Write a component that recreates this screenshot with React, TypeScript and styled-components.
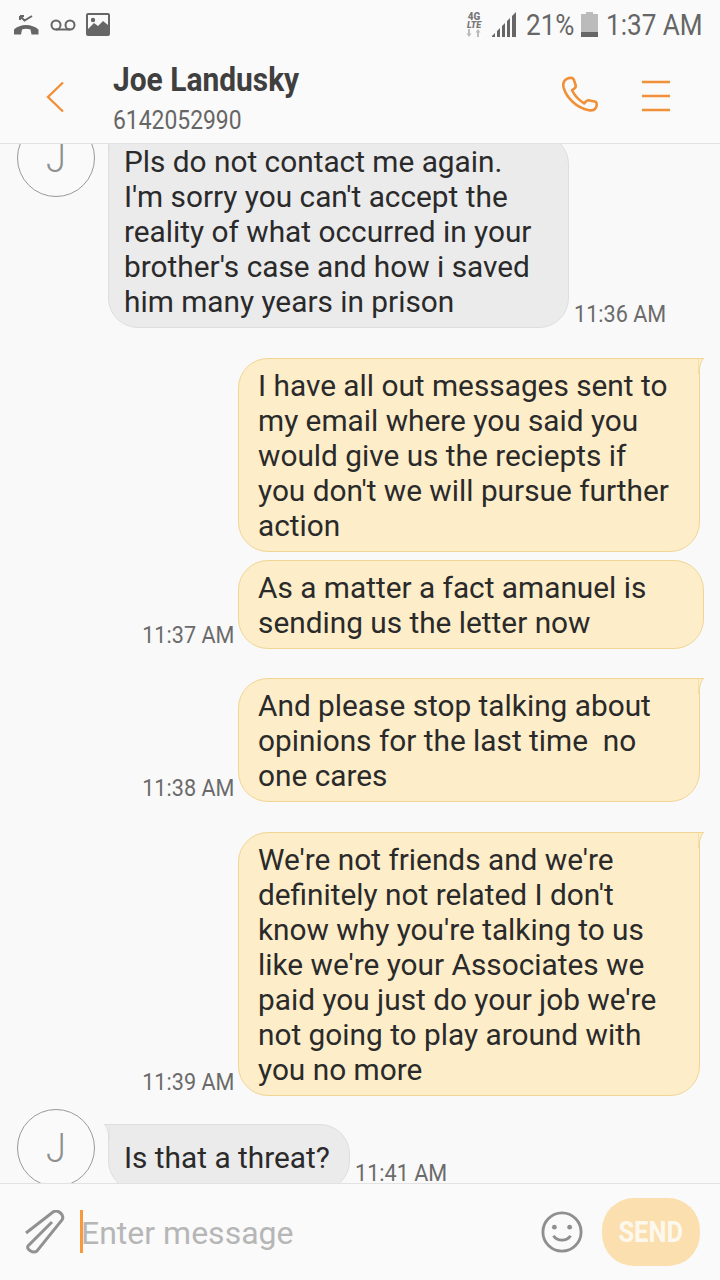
import React from 'react';
import styled, { createGlobalStyle } from 'styled-components';

const GlobalStyle = createGlobalStyle`
  html, body {
    margin: 0;
    padding: 0;
    background: #f9f9f9;
  }
  body {
    font-family: Roboto, "Liberation Sans", sans-serif;
  }
`;

const Screen = styled.div`
  width: 720px;
  height: 1280px;
  display: flex;
  flex-direction: column;
  overflow: hidden;
  background: #f9f9f9;
`;

const Top = styled.header`
  height: 144px;
  flex: none;
  box-sizing: border-box;
  background: #fafafa;
  border-bottom: 1px solid #e2e2e2;
  display: flex;
  flex-direction: column;
`;

const StatusBar = styled.div`
  height: 50px;
  display: flex;
  align-items: flex-start;
  justify-content: space-between;
  padding: 12px 17px 0 14px;
  box-sizing: border-box;
  color: #666;
`;

const StatusGroup = styled.div`
  display: flex;
  align-items: center;
  height: 25px;
`;

const NetworkMark = styled.div`
  width: 16px;
  margin-right: 10px;
  display: flex;
  flex-direction: column;
  align-items: center;
  font-weight: 900;
  color: #777;
`;

const FourG = styled.span`
  font-size: 11px;
  line-height: 9px;
  transform: scaleX(0.9);
`;

const Lte = styled.span`
  font-size: 9px;
  line-height: 8px;
  font-style: italic;
`;

const StatusText = styled.span<{ $w: number }>`
  width: ${p => p.$w}px;
  font-size: 30px;
  line-height: 25px;
  white-space: nowrap;
  display: inline-block;
  transform: scaleX(0.87);
  transform-origin: left center;
`;

const TitleBar = styled.div`
  flex: 1;
  display: flex;
  align-items: flex-start;
`;

const BackSlot = styled.div`
  width: 113px;
  flex: none;
  padding: 31px 0 0 46px;
  box-sizing: border-box;
`;

const TitleBlock = styled.div`
  flex: 1;
  display: flex;
  flex-direction: column;
  padding-top: 9px;
`;

const Name = styled.div`
  font-size: 34px;
  line-height: 40px;
  font-weight: 700;
  color: #3f3f3f;
  white-space: nowrap;
  transform: scaleX(0.88);
  transform-origin: left center;
`;

const Number = styled.div`
  font-size: 26px;
  line-height: 30px;
  margin-top: 6px;
  color: #666;
  transform: scaleX(0.88);
  transform-origin: left center;
`;

const TitleActions = styled.div`
  display: flex;
  align-items: center;
  gap: 41px;
  padding: 26px 50px 0 0;
`;

const Thread = styled.main`
  flex: 1;
  min-height: 0;
  overflow: hidden;
  display: flex;
  flex-direction: column;
  justify-content: flex-end;
`;

const Row = styled.div<{ $gap: number; $out?: boolean; $inset: number; $cut?: boolean }>`
  display: flex;
  flex: none;
  align-items: flex-end;
  margin-top: ${p => p.$gap}px;
  margin-bottom: ${p => (p.$cut ? -8 : 0)}px;
  padding: 0 ${p => p.$inset}px 0 ${p => (p.$out ? 0 : 17)}px;
  justify-content: ${p => (p.$out ? 'flex-end' : 'flex-start')};
`;

const Avatar = styled.div`
  width: 78px;
  height: 78px;
  flex: none;
  box-sizing: border-box;
  align-self: flex-start;
  margin: -15px 13px 0 0;
  border: 1.5px solid #999;
  border-radius: 50%;
  background: #fafafa;
  display: flex;
  align-items: center;
  justify-content: center;
  color: #8f8f8f;
  font-size: 40px;
  font-weight: 300;
`;

const Initial = styled.span`
  display: inline-block;
  transform: scaleX(0.9);
`;

const Bubble = styled.div<{ $out?: boolean; $tail?: boolean; $single?: boolean }>`
  position: relative;
  flex: none;
  box-sizing: border-box;
  padding: ${p => (p.$single ? '15px 19px 15px 15px' : `9px 19px 8px ${p.$out ? 19 : 15}px`)};
  font-size: 29.8px;
  line-height: 35px;
  color: #2a2a2a;
  white-space: pre;
  border: 1px solid ${p => (p.$out ? '#f0d594' : '#dedede')};
  background: ${p => (p.$out ? '#fdedc9' : '#ebebeb')};
  border-radius: 30px;
  ${p => p.$tail && (p.$out ? 'border-top-right-radius: 0;' : 'border-top-left-radius: 0;')}
`;

const Tail = styled.svg<{ $out?: boolean }>`
  position: absolute;
  top: -1px;
  width: 6px;
  height: 16px;
  ${p => (p.$out ? 'right: -5px;' : 'left: -5px;')}
`;

const Stamp = styled.span<{ $left?: boolean; $lift?: boolean }>`
  flex: none;
  font-size: 24px;
  line-height: 28px;
  color: #6b6b6b;
  white-space: nowrap;
  transform: scaleX(0.9);
  transform-origin: ${p => (p.$left ? 'right' : 'left')} center;
  margin: 0 ${p => (p.$left ? 4 : 0)}px ${p => (p.$lift ? 4 : 0)}px ${p => (p.$left ? 0 : 5)}px;
`;

const Composer = styled.footer`
  height: 97px;
  flex: none;
  box-sizing: border-box;
  background: #fafafa;
  border-top: 1px solid #e2e2e2;
  display: flex;
  align-items: center;
  padding: 0 20px 0 25px;
  position: relative;
`;

const Caret = styled.div`
  width: 3px;
  height: 43px;
  flex: none;
  margin: -1px 0 0 15px;
  background: #f79a3e;
`;

const Placeholder = styled.div`
  flex: 1;
  font-size: 32px;
  color: #b6b6b6;
  margin: 1px 0 0 -2px;
`;

const SendButton = styled.button`
  width: 98px;
  height: 68px;
  flex: none;
  margin: 0 0 0 19px;
  padding: 0;
  border: none;
  border-radius: 32px;
  background: #fbdfae;
  color: #fdf8ee;
  font-family: inherit;
  font-size: 29px;
  font-weight: 700;
`;

const SendLabel = styled.span`
  display: inline-block;
  transform: scaleX(0.88);
`;

const ORANGE = '#f0913a';

const MissedCall = () => (
  <svg width="25" height="22" viewBox="0 0 25 22" fill="none">
    <path d="M6 2l4.500 4.500L18 2M6 2h4M6 2v4" stroke="#666" strokeWidth="2" />
    <path d="M0 15.500C6 9.500 18 9.500 24.500 15.500v5H17.500l-1-5c-3-1-6-1-8.500 0l-1 5H0z" fill="#666" />
  </svg>
);

const Voicemail = () => (
  <svg width="26" height="12" viewBox="0 0 26 12" fill="none" style={{ marginLeft: 11 }}>
    <circle cx="6" cy="6" r="4.500" stroke="#666" strokeWidth="2" />
    <circle cx="20" cy="6" r="4.500" stroke="#666" strokeWidth="2" />
    <path d="M6 10.500h14" stroke="#666" strokeWidth="2" />
  </svg>
);

const Picture = () => (
  <svg width="24" height="23" viewBox="0 0 24 23" style={{ marginLeft: 10 }}>
    <rect width="24" height="23" rx="2" fill="#666" />
    <rect x="2" y="2" width="20" height="16" fill="#fafafa" />
    <circle cx="7" cy="7" r="2.200" fill="#666" />
    <path d="M2 16l6-6 4 3 5-5 5 4v8H2z" fill="#666" />
  </svg>
);

const DataArrows = () => (
  <svg width="16" height="8" viewBox="0 0 16 8" style={{ display: 'block' }}>
    <path d="M3 8L0.500 4.500H2V0h2v4.500h1.500zM12 0l2.500 3.500H13V8h-2V3.500H9.500z" fill="#bbb" />
  </svg>
);

const Signal = () => (
  <svg width="24" height="25" viewBox="0 0 24 25" style={{ marginRight: 10 }}>
    <path d="M0 25v-1l3-3v4zM5 25v-6l3-3v9zM10 25V14l3-3v14zM15 25V9l3-3v19zM20 25V4l4-4v25z" fill="#666" />
  </svg>
);

const Battery = () => (
  <svg width="17" height="25" viewBox="0 0 17 25" style={{ margin: '0 8px 0 7px' }}>
    <rect x="5" y="0" width="7" height="2" fill="#bbb" />
    <rect x="0" y="2" width="17" height="23" fill="#bbb" />
    <rect x="0" y="20" width="17" height="5" fill="#666" />
  </svg>
);

const Back = () => (
  <svg width="19" height="32" viewBox="0 0 19 32" fill="none" style={{ display: 'block' }}>
    <path d="M17 1.500L2 16l15 14.500" stroke={ORANGE} strokeWidth="2.400" />
  </svg>
);

const Phone = () => (
  <svg width="40" height="40" viewBox="0 0 38 38" fill="none" style={{ display: 'block' }}>
    <path
      d="M6 2.500c2-1 5-1 6 .5l2 6c.3 1.500-1 3-3.500 4.500 2.500 5.500 6 9 11.500 12.500 1.500-2 2.500-3 4-3l7 1.500c1.500 1 1 5-.5 6.500-1.500 2-3 2-6 1.500C14 30 5 20 2.500 11 1.500 7 3 4 6 2.500z"
      stroke={ORANGE}
      strokeWidth="2.500"
      strokeLinejoin="round"
    />
  </svg>
);

const Menu = () => (
  <svg width="28" height="32" viewBox="0 0 28 32" style={{ display: 'block' }}>
    <path d="M0 2h28M0 16h28M0 30h28" stroke={ORANGE} strokeWidth="2.600" />
  </svg>
);

const Clip = () => (
  <svg width="40" height="44" viewBox="0 0 40 44" fill="none" style={{ flex: 'none' }}>
    <path
      d="M1 23L28 2C33-1 40 5 37 10L12 41C8 44 1 39 3 36L27 12"
      stroke="#919191"
      strokeWidth="3"
    />
  </svg>
);

const Smile = () => (
  <svg width="42" height="42" viewBox="0 0 44 44" fill="none" style={{ flex: 'none' }}>
    <circle cx="22" cy="22" r="20" stroke="#8f8f8f" strokeWidth="3" />
    <circle cx="14" cy="17" r="2.500" fill="#8f8f8f" />
    <circle cx="30" cy="17" r="2.500" fill="#8f8f8f" />
    <path d="M13 26c4 6 14 6 18 0" stroke="#8f8f8f" strokeWidth="3" />
  </svg>
);

type Msg = {
  out?: boolean;
  tail?: boolean;
  gap: number;
  time?: string;
  width?: number;
  inset?: number;
  lines: string[];
};

const messages: Msg[] = [
  {
    gap: 0,
    time: '11:36 AM',
    width: 461,
    lines: [
      'Pls do not contact me again.',
      "I'm sorry you can't accept the",
      'reality of what occurred in your',
      "brother's case and how i saved",
      'him many years in prison',
    ],
  },
  {
    out: true,
    tail: true,
    gap: 30,
    width: 462,
    inset: 20,
    lines: [
      'I have all out messages sent to',
      'my email where you said you',
      'would give us the reciepts if',
      "you don't we will pursue further",
      'action',
    ],
  },
  {
    out: true,
    gap: 8,
    time: '11:37 AM',
    width: 466,
    inset: 16,
    lines: ['As a matter a fact amanuel is', 'sending us the letter now'],
  },
  {
    out: true,
    tail: true,
    gap: 29,
    time: '11:38 AM',
    width: 462,
    inset: 20,
    lines: ['And please stop talking about', 'opinions for the last time  no', 'one cares'],
  },
  {
    out: true,
    tail: true,
    gap: 30,
    time: '11:39 AM',
    width: 462,
    inset: 20,
    lines: [
      "We're not friends and we're",
      "definitely not related I don't",
      "know why you're talking to us",
      "like we're your Associates we",
      "paid you just do your job we're",
      'not going to play around with',
      'you no more',
    ],
  },
  {
    gap: 28,
    time: '11:41 AM',
    lines: ['Is that a threat?'],
  },
];

const App = () => {
  return (
    <Screen>
      <GlobalStyle />
      <Top>
        <StatusBar>
          <StatusGroup>
            <MissedCall />
            <Voicemail />
            <Picture />
          </StatusGroup>
          <StatusGroup>
            <NetworkMark>
              <FourG>4G</FourG>
              <Lte>LTE</Lte>
              <DataArrows />
            </NetworkMark>
            <Signal />
            <StatusText $w={48}>21%</StatusText>
            <Battery />
            <StatusText $w={97}>1:37 AM</StatusText>
          </StatusGroup>
        </StatusBar>
        <TitleBar>
          <BackSlot>
            <Back />
          </BackSlot>
          <TitleBlock>
            <Name>Joe Landusky</Name>
            <Number>6142052990</Number>
          </TitleBlock>
          <TitleActions>
            <Phone />
            <Menu />
          </TitleActions>
        </TitleBar>
      </Top>
      <Thread>
        {messages.map((m, i) => {
          const last = i === messages.length - 1;
          return (
            <Row key={i} $gap={m.gap} $out={m.out} $inset={m.inset ?? 0} $cut={last}>
              {!m.out && (
                <Avatar>
                  <Initial>J</Initial>
                </Avatar>
              )}
              {m.out && m.time && <Stamp $left>{m.time}</Stamp>}
              <Bubble
                $out={m.out}
                $tail={m.tail || !m.out}
                $single={last}
                style={m.width ? { width: m.width } : undefined}
              >
                {(m.tail || !m.out) && (
                  <Tail $out={m.out} viewBox="0 0 6 16">
                    {m.out ? (
                      <path d="M0 0.500H5.500C2.500 4 1 9 1 16H0z" fill="#fdedc9" stroke="#f0d594" strokeWidth="1" />
                    ) : (
                      <path d="M6 0.500H0.500C3.500 4 5 9 5 16H6z" fill="#ebebeb" stroke="#dedede" strokeWidth="1" />
                    )}
                  </Tail>
                )}
                {m.lines.join('\n')}
              </Bubble>
              {!m.out && m.time && <Stamp $lift={last}>{m.time}</Stamp>}
            </Row>
          );
        })}
      </Thread>
      <Composer>
        <Clip />
        <Caret />
        <Placeholder>Enter message</Placeholder>
        <Smile />
        <SendButton>
          <SendLabel>SEND</SendLabel>
        </SendButton>
      </Composer>
    </Screen>
  );
};

export default App;
